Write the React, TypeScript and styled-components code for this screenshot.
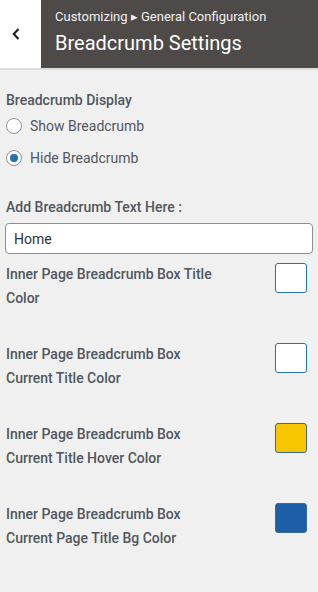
import React, { useState } from "react";
import styled, { createGlobalStyle } from "styled-components";

const GlobalStyle = createGlobalStyle`
  html, body {
    margin: 0;
    padding: 0;
    background: #f0f0f1;
  }
  body {
    font-family: Roboto, "Liberation Sans", sans-serif;
    color: #50575e;
  }
`;

const Page = styled.div`
  width: 318px;
  min-height: 592px;
  background: #f0f0f1;
`;

const Header = styled.div`
  display: flex;
  height: 68px;
  border-bottom: 2px solid #dcdcde;
`;

const BackButton = styled.button`
  width: 41px;
  border: 0;
  padding: 0;
  background: #fff;
  display: flex;
  align-items: center;
  justify-content: center;
  padding-right: 9px;
  cursor: pointer;
`;

const HeaderTitles = styled.div`
  flex: 1;
  background: #4e4a48;
  padding: 8px 0 0 14px;
  color: #fff;
`;

const Crumb = styled.div`
  font-size: 13px;
  line-height: 17px;
  color: #f0f0f0;
`;

const Title = styled.div`
  font-size: 20px;
  line-height: 26px;
  margin-top: 5px;
`;

const Body = styled.div`
  padding: 20px 5px 0 6px;
`;

const Label = styled.div`
  font-size: 14px;
  font-weight: 500;
  line-height: 20px;
`;

const RadioRow = styled.label<{ $top: number }>`
  display: flex;
  align-items: center;
  gap: 8px;
  height: 20px;
  margin-top: ${(p) => p.$top}px;
  font-size: 14px;
  cursor: pointer;
`;

const RadioCircle = styled.span<{ $checked: boolean }>`
  width: 14px;
  height: 14px;
  border-radius: 50%;
  border: 1px solid #8c8f94;
  background: #fff;
  display: flex;
  align-items: center;
  justify-content: center;
  &::after {
    content: "";
    width: 8px;
    height: 8px;
    border-radius: 50%;
    background: ${(p) => (p.$checked ? "#2271b1" : "transparent")};
  }
`;

const FieldLabel = styled(Label)`
  margin-top: 29px;
`;

const TextInput = styled.input`
  display: block;
  box-sizing: border-box;
  width: 308px;
  height: 31px;
  margin: 6px 0 0 -1px;
  padding: 0 8px;
  border: 1px solid #8c8f94;
  border-radius: 4px;
  background: #fff;
  font-family: Roboto, "Liberation Sans", sans-serif;
  font-size: 14px;
  color: #2c3338;
  outline: none;
`;

const ColorList = styled.div`
  margin-top: 9px;
`;

const ColorRow = styled.div`
  display: flex;
  justify-content: space-between;
  align-items: flex-start;
  height: 80px;
  padding-right: 6px;
`;

const ColorLabel = styled.div`
  width: 215px;
  font-size: 14px;
  font-weight: 500;
  line-height: 24px;
  margin-top: -1px;
`;

const Swatch = styled.button<{ $color: string }>`
  width: 32px;
  height: 30px;
  padding: 0;
  border-radius: 3px;
  border: 1px solid ${(p) => (p.$color === "#ffffff" ? "#2271b1" : "#3b6d8c")};
  background: ${(p) => p.$color};
  cursor: pointer;
`;

const colors = [
  { label: "Inner Page Breadcrumb Box Title Color", color: "#ffffff" },
  { label: "Inner Page Breadcrumb Box Current Title Color", color: "#ffffff" },
  { label: "Inner Page Breadcrumb Box Current Title Hover Color", color: "#f7c600" },
  { label: "Inner Page Breadcrumb Box Current Page Title Bg Color", color: "#1d5ea8" },
];

export default function App() {
  const [show, setShow] = useState(false);
  const [text, setText] = useState("Home");

  return (
    <Page>
      <GlobalStyle />
      <Header>
        <BackButton aria-label="Back">
          <svg width="8" height="12" viewBox="0 0 8 12">
            <path d="M6.5 1 L1.8 6 L6.5 11" fill="none" stroke="#1d2327" strokeWidth="2.2" />
          </svg>
        </BackButton>
        <HeaderTitles>
          <Crumb>Customizing ▸ General Configuration</Crumb>
          <Title>Breadcrumb Settings</Title>
        </HeaderTitles>
      </Header>
      <Body>
        <Label>Breadcrumb Display</Label>
        <RadioRow $top={6} onClick={() => setShow(true)}>
          <RadioCircle $checked={show} />
          Show Breadcrumb
        </RadioRow>
        <RadioRow $top={12} onClick={() => setShow(false)}>
          <RadioCircle $checked={!show} />
          Hide Breadcrumb
        </RadioRow>
        <FieldLabel>Add Breadcrumb Text Here :</FieldLabel>
        <TextInput value={text} onChange={(e) => setText(e.target.value)} />
        <ColorList>
          {colors.map((c, i) => (
            <ColorRow key={i}>
              <ColorLabel>{c.label}</ColorLabel>
              <Swatch $color={c.color} />
            </ColorRow>
          ))}
        </ColorList>
      </Body>
    </Page>
  );
}
